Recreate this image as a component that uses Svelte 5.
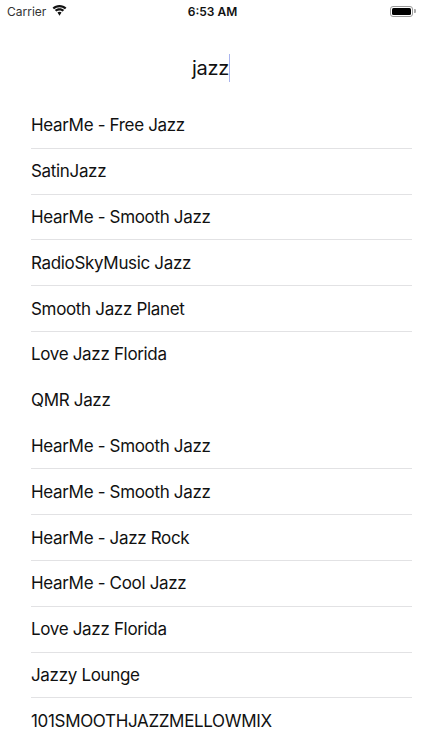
<script>
  const stations = [
    { name: 'HearMe - Free Jazz', line: true },
    { name: 'SatinJazz', line: true },
    { name: 'HearMe - Smooth Jazz', line: true },
    { name: 'RadioSkyMusic Jazz', line: true },
    { name: 'Smooth Jazz Planet', line: true },
    { name: 'Love Jazz Florida', line: false },
    { name: 'QMR Jazz', line: false },
    { name: 'HearMe - Smooth Jazz', line: true },
    { name: 'HearMe - Smooth Jazz', line: true },
    { name: 'HearMe - Jazz Rock', line: true },
    { name: 'HearMe - Cool Jazz', line: true },
    { name: 'Love Jazz Florida', line: true },
    { name: 'Jazzy Lounge', line: true },
    { name: '101SMOOTHJAZZMELLOWMIX', line: false }
  ];
</script>

<div class="screen">
  <header class="status">
    <div class="left">
      <span class="carrier">Carrier</span>
      <svg class="wifi" width="15" height="11" viewBox="0 0 16 12" aria-hidden="true">
        <path d="M8 2.400c2.300 0 4.300.9 5.900 2.300l1.700-1.800C13.600 1 10.900 0 8 0S2.400 1 .4 2.900l1.700 1.800C3.700 3.300 5.700 2.400 8 2.400z" fill="#111"/>
        <path d="M8 5.900c1.300 0 2.500.5 3.400 1.300l1.700-1.800C11.700 4.200 9.900 3.500 8 3.500s-3.700.7-5.100 1.900l1.700 1.800c.9-.8 2.100-1.300 3.400-1.300z" fill="#111"/>
        <path d="M8 7.400c-.9 0-1.600.3-2.200.8L8 11.700l2.200-3.500c-.6-.5-1.300-.8-2.200-.8z" fill="#111"/>
      </svg>
    </div>
    <span class="time">6:53 AM</span>
    <div class="battery" aria-hidden="true">
      <span class="shell"><span class="fill"></span></span>
      <span class="cap"></span>
    </div>
  </header>

  <div class="search">
    <span class="query">jazz</span><span class="caret"></span>
  </div>

  <ul class="list">
    {#each stations as s}
      <li class:line={s.line}>{s.name}</li>
    {/each}
  </ul>
</div>

<style>
  :global(body) {
    margin: 0;
    background: #fff;
  }
  .screen {
    width: 422px;
    height: 750px;
    overflow: hidden;
    background: #fff;
    color: #111;
    font-family: Inter, "Liberation Sans", sans-serif;
  }
  .status {
    height: 22px;
    display: flex;
    align-items: center;
    justify-content: space-between;
    padding: 0 6px 0 7px;
    font-size: 12px;
  }
  .left {
    display: flex;
    align-items: center;
    gap: 6px;
    width: 120px;
  }
  .carrier {
    color: #333;
  }
  .wifi {
    margin-top: -2px;
  }
  .time {
    font-weight: 600;
    font-size: 12px;
    margin-left: 2px;
  }
  .battery {
    width: 120px;
    display: flex;
    justify-content: flex-end;
    align-items: center;
  }
  .shell {
    width: 23px;
    height: 11px;
    box-sizing: border-box;
    border: 1px solid #999;
    border-radius: 3px;
    padding: 1px;
    display: flex;
  }
  .fill {
    flex: 1;
    background: #000;
    border-radius: 1.500px;
  }
  .cap {
    width: 2px;
    height: 4px;
    margin-left: 1px;
    background: #aaa;
    border-radius: 0 1px 1px 0;
  }
  .search {
    height: 34px;
    margin-top: 29px;
    display: flex;
    justify-content: center;
    align-items: center;
    font-size: 20px;
    letter-spacing: -0.300px;
  }
  .caret {
    width: 1px;
    height: 28px;
    background: #a9b4ee;
  }
  .list {
    list-style: none;
    margin: 18px 0 0 31px;
    padding: 0;
    width: 381px;
  }
  li {
    height: 45.800px;
    box-sizing: border-box;
    display: flex;
    align-items: center;
    font-size: 17px;
    letter-spacing: -0.330px;
    border-bottom: 1px solid transparent;
  }
  li.line {
    border-bottom-color: #e2e2e4;
  }
</style>
